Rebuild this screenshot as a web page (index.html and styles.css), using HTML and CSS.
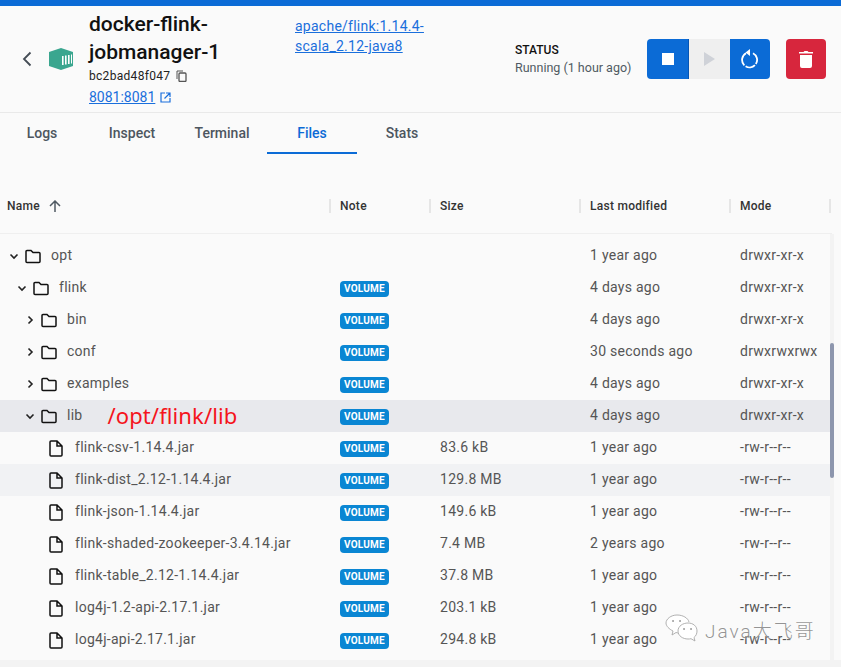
FILE: index.html
```html
<html>
  <head>
    <meta charset="UTF-8" />
    <title>docker-flink-jobmanager-1</title>
    <link rel="stylesheet" href="styles.css">
  </head>
  <body>
    <div class="top_bar"></div>
    <div class="head">
      <svg class="back" width="12" height="16" viewBox="0 0 12 16"><path d="M9.500 1.500 3 8l6.500 6.500" fill="none" stroke="#444c55" stroke-width="1.800"/></svg>
      <svg class="box" width="26" height="24" viewBox="0 0 26 24">
        <path d="M13 1 25 5v14l-12 4L1 19V5z" fill="#3aa68f"/>
        <path d="M14 9h1.600v9H14zM17 8.500h1.600v9H17zM20 8h1.600v9H20zM23 7.500h1v9h-1z" fill="#fff"/>
      </svg>
      <div class="title_box">
        <div class="title">docker-flink-jobmanager-1</div>
        <div class="hash">bc2bad48f047
          <svg width="11" height="12" viewBox="0 0 11 12"><path d="M1 9V1h6" fill="none" stroke="#555" stroke-width="1"/><rect x="3" y="3" width="7" height="8.500" rx="1" fill="none" stroke="#555" stroke-width="1.300"/></svg>
        </div>
        <div class="ports"><a>8081:8081</a>
          <svg width="11" height="11" viewBox="0 0 11 11"><path d="M5 1H1v9h9V6M6 1h4v4M10 1 4.500 6.500" fill="none" stroke="#1a6fdc" stroke-width="1.200"/></svg>
        </div>
      </div>
      <div class="image_box"><a>apache/flink:1.14.4-scala_2.12-java8</a></div>
      <div class="status_box">
        <div class="status_tit">STATUS</div>
        <div class="status_txt">Running (1 hour ago)</div>
      </div>
      <div class="btns">
        <div class="btn btn_stop"><svg width="12" height="12"><rect width="12" height="12" fill="#fff"/></svg></div>
        <div class="btn btn_play"><svg width="11" height="14"><path d="M0 0 11 7 0 14z" fill="#cfd2d8"/></svg></div>
        <div class="btn btn_restart"><svg width="18" height="20" viewBox="0 0 18 20"><path d="M5 4.300A7.500 7.500 0 1 0 12 4.200" fill="none" stroke="#fff" stroke-width="1.800" stroke-dasharray="14 1.500 10 1.500 14"/><path d="M9 0v7L4.500 3.500z" fill="#fff"/></svg></div>
      </div>
      <div class="btn btn_del"><svg width="14" height="18" viewBox="0 0 14 18"><path d="M0 2h4.500l1-1h3l1 1H14v1.500H0zM1 5h12v11a2 2 0 0 1-2 2H3a2 2 0 0 1-2-2z" fill="#fff"/></svg></div>
    </div>
    <ul class="tabs">
      <li>Logs</li>
      <li>Inspect</li>
      <li>Terminal</li>
      <li class="on">Files</li>
      <li>Stats</li>
    </ul>
    <div class="row row_head">
      <div class="cell">Name
        <svg class="sort" width="12" height="12" viewBox="0 0 12 12"><path d="M6 12V1M1 6l5-5 5 5" fill="none" stroke="#505a63" stroke-width="1.500"/></svg>
      </div>
      <div class="cell">Note</div>
      <div class="cell">Size</div>
      <div class="cell">Last modified</div>
      <div class="cell">Mode</div>
    </div>
    <div class="list_wrap">
      <div class="list">
        <div class="row">
          <div class="cell name d0"><svg class="arrow"><use href="#down"/></svg><svg class="folder"><use href="#dir"/></svg>opt</div>
          <div class="cell"></div><div class="cell"></div><div class="cell">1 year ago</div><div class="cell">drwxr-xr-x</div>
        </div>
        <div class="row">
          <div class="cell name d1"><svg class="arrow"><use href="#down"/></svg><svg class="folder"><use href="#dir"/></svg>flink</div>
          <div class="cell"><span class="tag">VOLUME</span></div><div class="cell"></div><div class="cell">4 days ago</div><div class="cell">drwxr-xr-x</div>
        </div>
        <div class="row">
          <div class="cell name d2"><svg class="arrow"><use href="#right"/></svg><svg class="folder"><use href="#dir"/></svg>bin</div>
          <div class="cell"><span class="tag">VOLUME</span></div><div class="cell"></div><div class="cell">4 days ago</div><div class="cell">drwxr-xr-x</div>
        </div>
        <div class="row">
          <div class="cell name d2"><svg class="arrow"><use href="#right"/></svg><svg class="folder"><use href="#dir"/></svg>conf</div>
          <div class="cell"><span class="tag">VOLUME</span></div><div class="cell"></div><div class="cell">30 seconds ago</div><div class="cell">drwxrwxrwx</div>
        </div>
        <div class="row">
          <div class="cell name d2"><svg class="arrow"><use href="#right"/></svg><svg class="folder"><use href="#dir"/></svg>examples</div>
          <div class="cell"><span class="tag">VOLUME</span></div><div class="cell"></div><div class="cell">4 days ago</div><div class="cell">drwxr-xr-x</div>
        </div>
        <div class="row row_sel">
          <div class="cell name d2"><svg class="arrow"><use href="#down"/></svg><svg class="folder"><use href="#dir"/></svg>lib<span class="mark">/opt/flink/lib</span></div>
          <div class="cell"><span class="tag">VOLUME</span></div><div class="cell"></div><div class="cell">4 days ago</div><div class="cell">drwxr-xr-x</div>
        </div>
        <div class="row">
          <div class="cell name d_file"><svg class="file"><use href="#doc"/></svg>flink-csv-1.14.4.jar</div>
          <div class="cell"><span class="tag">VOLUME</span></div><div class="cell">83.6 kB</div><div class="cell">1 year ago</div><div class="cell">-rw-r--r--</div>
        </div>
        <div class="row row_hover">
          <div class="cell name d_file"><svg class="file"><use href="#doc"/></svg>flink-dist_2.12-1.14.4.jar</div>
          <div class="cell"><span class="tag">VOLUME</span></div><div class="cell">129.8 MB</div><div class="cell">1 year ago</div><div class="cell">-rw-r--r--</div>
        </div>
        <div class="row">
          <div class="cell name d_file"><svg class="file"><use href="#doc"/></svg>flink-json-1.14.4.jar</div>
          <div class="cell"><span class="tag">VOLUME</span></div><div class="cell">149.6 kB</div><div class="cell">1 year ago</div><div class="cell">-rw-r--r--</div>
        </div>
        <div class="row">
          <div class="cell name d_file"><svg class="file"><use href="#doc"/></svg>flink-shaded-zookeeper-3.4.14.jar</div>
          <div class="cell"><span class="tag">VOLUME</span></div><div class="cell">7.4 MB</div><div class="cell">2 years ago</div><div class="cell">-rw-r--r--</div>
        </div>
        <div class="row">
          <div class="cell name d_file"><svg class="file"><use href="#doc"/></svg>flink-table_2.12-1.14.4.jar</div>
          <div class="cell"><span class="tag">VOLUME</span></div><div class="cell">37.8 MB</div><div class="cell">1 year ago</div><div class="cell">-rw-r--r--</div>
        </div>
        <div class="row">
          <div class="cell name d_file"><svg class="file"><use href="#doc"/></svg>log4j-1.2-api-2.17.1.jar</div>
          <div class="cell"><span class="tag">VOLUME</span></div><div class="cell">203.1 kB</div><div class="cell">1 year ago</div><div class="cell">-rw-r--r--</div>
        </div>
        <div class="row">
          <div class="cell name d_file"><svg class="file"><use href="#doc"/></svg>log4j-api-2.17.1.jar</div>
          <div class="cell"><span class="tag">VOLUME</span></div><div class="cell">294.8 kB</div><div class="cell">1 year ago</div><div class="cell">-rw-r--r--</div>
        </div>
      </div>
      <div class="track"><div class="thumb"></div></div>
    </div>
    <div class="bottom_band"></div>
    <div class="water">
      <svg width="36" height="30" viewBox="0 0 36 30" fill="#fff" stroke="#a8a8a8" stroke-width="0.900">
        <path d="M16 19c-1 0-2-.2-3-.5L9 21l1-4c-4-2-7-5-7-8 0-4 5-8 11-8s11 3 12 7"/>
        <path d="M34 17c0-5-4-8-9-8s-10 3-10 8 5 8 10 8c1 0 2 0 3-.3l4 2.300-1-3.500c2-1.500 3-4 3-6.500z"/>
        <path d="M10 7h.1M17 7h.1M21 15h.1M28 15h.1" stroke="#999" stroke-width="1.800" stroke-linecap="round"/>
      </svg>
      <span>Java大飞哥</span>
    </div>
    <svg class="defs" width="0" height="0">
      <defs>
        <g id="down"><path d="M3.500 5.500 7 9 10.500 5.500" fill="none" stroke="#222" stroke-width="1.600"/></g>
        <g id="right"><path d="M5.500 3.500 9 7 5.500 10.500" fill="none" stroke="#222" stroke-width="1.600"/></g>
        <g id="dir"><path d="M1 2.500a1 1 0 0 1 1-1h4l2 2h6a1 1 0 0 1 1 1v8a1 1 0 0 1-1 1H2a1 1 0 0 1-1-1z" fill="none" stroke="#111" stroke-width="1.500"/></g>
        <g id="doc"><path d="M1 2a1 1 0 0 1 1-1h6l5 5v9a1 1 0 0 1-1 1H2a1 1 0 0 1-1-1zM8 1v5h5" fill="none" stroke="#111" stroke-width="1.500"/></g>
      </defs>
    </svg>
  </body>
</html>
```

FILE: styles.css
```css
* {
  margin: 0;
  padding: 0;
  box-sizing: border-box;
}
html,
body {
  height: 100%;
  overflow: hidden;
}
body {
  font-family: "Roboto", "Noto Sans CJK SC", sans-serif;
  background: #fafafa;
  color: #555;
  font-size: 14px;
  position: relative;
}
li {
  list-style-type: none;
}
a {
  color: #1a6fdc;
  text-decoration: underline;
}
.top_bar {
  height: 6px;
  background: #0b6bd6;
}
.head {
  display: flex;
  align-items: flex-start;
  height: 107px;
  border-bottom: 1px solid #e9e9e9;
}
.back {
  margin: 45px 0 0 21px;
  flex: none;
}
.box {
  margin: 41px 0 0 15px;
  flex: none;
}
.title_box {
  width: 170px;
  margin-left: 15px;
  padding-top: 4px;
}
.title {
  font-size: 21px;
  font-weight: 500;
  line-height: 28px;
  color: #111;
}
.hash {
  font-size: 12px;
  line-height: 20px;
  color: #222;
  letter-spacing: 0.3px;
  display: flex;
  align-items: center;
  gap: 6px;
}
.ports {
  font-size: 14px;
  line-height: 22px;
  display: flex;
  align-items: center;
  gap: 5px;
}
.image_box {
  width: 140px;
  margin-left: 36px;
  padding-top: 10px;
  line-height: 20px;
  letter-spacing: 0.25px;
}
.status_box {
  margin-left: 80px;
  padding-top: 36px;
  width: 132px;
}
.status_tit {
  font-size: 12px;
  font-weight: 500;
  line-height: 16px;
  color: #111;
}
.status_txt {
  font-size: 12.5px;
  line-height: 20px;
  color: #505a63;
}
.btns {
  display: flex;
  margin-top: 33px;
  border-radius: 4px;
  overflow: hidden;
}
.btn {
  height: 40px;
  display: flex;
  align-items: center;
  justify-content: center;
}
.btn_stop {
  width: 42px;
  background: #0b6bd6;
  border-right: 1px solid #0555b5;
}
.btn_play {
  width: 41px;
  background: #efefef;
}
.btn_restart {
  width: 40px;
  background: #0b6bd6;
}
.btn_del {
  width: 40px;
  margin: 33px 0 0 16px;
  background: #d7263d;
  border-radius: 4px;
}
.tabs {
  display: flex;
  height: 41px;
  margin-left: -3px;
}
.tabs li {
  width: 90px;
  line-height: 40px;
  text-align: center;
  font-weight: 500;
  color: #4d565f;
}
.tabs li.on {
  color: #0b6bd6;
  border-bottom: 2px solid #0b6bd6;
}
.row {
  display: grid;
  grid-template-columns: 330px 100px 150px 150px 100px;
  width: 830px;
  height: 32px;
  align-items: center;
  letter-spacing: 0.27px;
}
.row .cell {
  padding: 0 0 2px 10px;
  white-space: nowrap;
}
.row_head {
  height: 80px;
  width: 832px;
  padding-top: 45px;
  align-items: start;
  border-bottom: 1px solid #efefef;
}
.row_head .cell {
  height: 14px;
  line-height: 14px;
  padding-bottom: 0;
  font-size: 12px;
  font-weight: 500;
  color: #333;
  border-right: 2px solid #e6e6e6;
  margin-right: -1px;
  display: flex;
  align-items: center;
}
.row .cell:first-child {
  padding-left: 7px;
}
.sort {
  margin-left: 9px;
}
.list_wrap {
  display: flex;
  height: 426px;
  overflow: hidden;
}
.list {
  width: 830px;
  padding-top: 6px;
  flex: none;
}
.track {
  width: 4px;
  background: #f3f3f3;
  padding-top: 109px;
}
.thumb {
  height: 135px;
  background: #8d96ad;
  border-radius: 2px;
}
.row_sel {
  background: #e8e9ed;
}
.row_hover {
  background: #f1f2f4;
}
.row .name {
  display: flex;
  align-items: center;
}
.row .cell.d1 {
  padding-left: 15px;
}
.row .cell.d2 {
  padding-left: 23px;
}
.row .cell.d_file {
  padding-left: 49px;
}
.arrow {
  width: 14px;
  height: 14px;
  margin-top: 2px;
  flex: none;
}
.folder {
  width: 16px;
  height: 15px;
  margin: 2px 10px 0 4px;
  flex: none;
}
.file {
  width: 14px;
  height: 17px;
  margin: 2px 12px 0 0;
  flex: none;
}
.mark {
  margin-left: 25px;
  font-family: "Noto Sans", sans-serif;
  font-size: 22px;
  line-height: 28px;
  letter-spacing: 0.1px;
  color: #f5141c;
}
.tag {
  display: inline-block;
  width: 49px;
  height: 16px;
  line-height: 16px;
  margin-top: 4px;
  text-align: center;
  border-radius: 4px;
  background: #0a86d3;
  color: #fff;
  font-size: 10px;
  font-weight: 700;
  letter-spacing: 0.2px;
  vertical-align: middle;
}
.bottom_band {
  height: 7px;
  background: #f3f3f3;
}
.water {
  position: absolute;
  left: 663px;
  top: 614px;
  display: flex;
  align-items: center;
  gap: 6px;
  color: rgba(120, 120, 120, 0.8);
  font-size: 19px;
  font-weight: 300;
  letter-spacing: 2px;
  text-shadow: 0 0 2px #fff;
}
.defs {
  position: absolute;
}
```
